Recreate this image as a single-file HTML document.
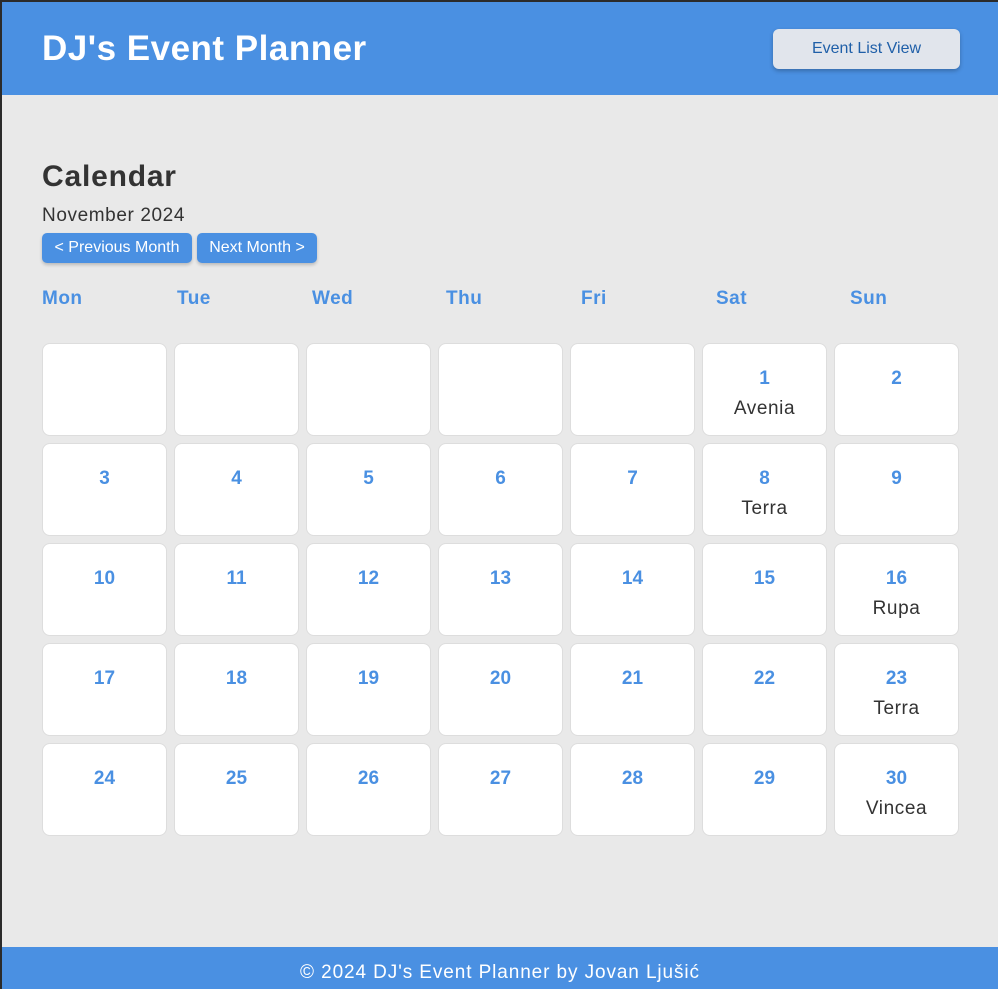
<!DOCTYPE html>
<html><head><style>
html,body{margin:0;padding:0;height:989px}
body{width:998px;height:989px;background:#2b2b2b;font-family:"Liberation Sans",sans-serif;overflow:hidden;position:relative}
.page{position:absolute;left:2px;top:2px;width:996px;height:987px;background:#e9e9e9;overflow:hidden}
header{position:absolute;left:0;top:0;width:996px;height:93px;background:#4a90e2}
header h1{position:absolute;left:40px;top:27px;margin:0;color:#fff;font-size:35px;font-weight:bold;letter-spacing:0.5px}
.elv{position:absolute;left:771px;top:27px;width:187px;height:40px;background:#e1e5ec;border-radius:6px;box-shadow:0 2px 4px rgba(0,0,0,.25);color:#1f5fa8;font-size:16px;text-align:center;line-height:40px}
h2{position:absolute;left:40px;top:158px;margin:0;font-size:30px;color:#333;font-weight:bold;letter-spacing:0.8px}
.month{position:absolute;left:40px;top:203px;font-size:19px;color:#333;letter-spacing:0.6px}
.btn{position:absolute;top:231px;height:30px;background:#4a90e2;color:#fff;border-radius:5px;font-size:16px;line-height:30px;text-align:center;box-shadow:0 2px 3px rgba(0,0,0,.2)}
.dn{position:absolute;top:286px;color:#4a90e2;font-weight:bold;font-size:19px;letter-spacing:0.5px}
.cell{position:absolute;width:123px;height:91px;background:#fff;border:1px solid #ddd;border-radius:8px;text-align:center}
.cell b{display:block;margin-top:24px;color:#4a90e2;font-size:19px;line-height:22px}
.cell span{display:block;margin-top:8px;color:#333;font-size:19px;letter-spacing:0.6px;line-height:22px}
footer{position:absolute;left:0;top:945px;width:996px;height:42px;background:#4a90e2;color:#fff;text-align:center;font-size:19px;line-height:52px;letter-spacing:0.9px}
</style></head><body><div class="page">
<header><h1>DJ's Event Planner</h1><div class="elv">Event List View</div></header>
<h2>Calendar</h2>
<div class="month">November 2024</div>
<div class="btn" style="left:40px;width:150px">&lt; Previous Month</div>
<div class="btn" style="left:195px;width:120px">Next Month &gt;</div>
<div class="dn" style="left:40px">Mon</div><div class="dn" style="left:175px">Tue</div><div class="dn" style="left:310px">Wed</div><div class="dn" style="left:444px">Thu</div><div class="dn" style="left:579px">Fri</div><div class="dn" style="left:714px">Sat</div><div class="dn" style="left:848px">Sun</div>
<div id="g"></div>
<footer>© 2024 DJ's Event Planner by Jovan Ljušić</footer>
</div>
<script>
var ev={1:"Avenia",8:"Terra",16:"Rupa",23:"Terra",30:"Vincea"},h="";
for(var i=0;i<35;i++){var r=Math.floor(i/7),c=i%7,d=i-4;
h+='<div class="cell" style="left:'+(40+c*132)+'px;top:'+(341+r*100)+'px">'+(d>=1?'<b>'+d+'</b>'+(ev[d]?'<span>'+ev[d]+'</span>':''):'')+'</div>';}
document.getElementById('g').outerHTML=h;
</script>
</body></html>
